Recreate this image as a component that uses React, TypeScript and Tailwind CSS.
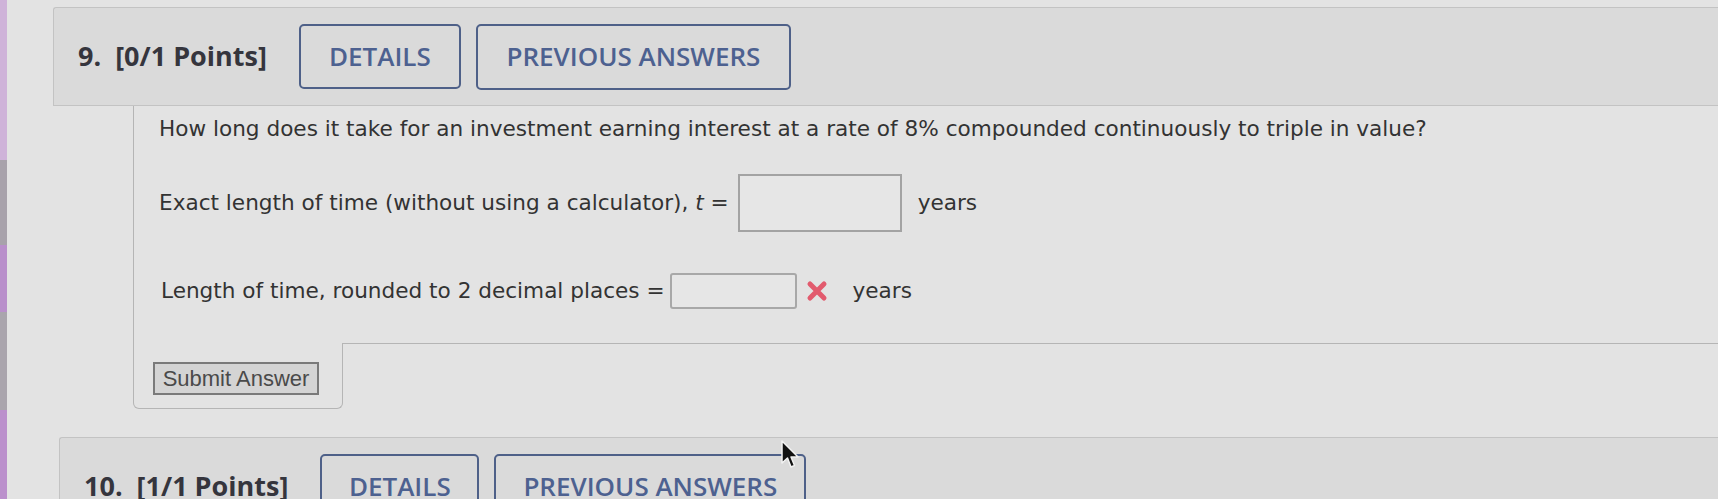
import React from "react";

function RedX() {
  return (
    <svg width="22" height="22" viewBox="0 0 22 22" className="shrink-0">
      <path d="M4 4 L18 18 M18 4 L4 18" stroke="#e25b6e" strokeWidth="5" strokeLinecap="round" />
    </svg>
  );
}

function Cursor() {
  return (
    <svg width="22" height="32" viewBox="0 0 22 32" className="absolute left-[780px] top-[439px]">
      <path d="M2 2 L2 24 L7.5 19 L11 28 L14.5 26.5 L11 18 L18 18 Z" fill="#111" stroke="#f2f2f2" strokeWidth="1.5" strokeLinejoin="round" />
    </svg>
  );
}

function Header({ num, pts, top, left, detailsW, prevW }: { num: string; pts: string; top: string; left: string; detailsW: string; prevW: string }) {
  return (
    <div className={`${top} ${left} h-[99px] shrink-0 bg-[#dadada] border-t border-l border-b border-[#c3c3c3] rounded-tl-[3px] flex items-center pl-[24px] font-['Open_Sans',sans-serif]`}>
      <span className="text-[27px] font-bold text-[#35353d] whitespace-pre">
        {num}
        {"  "}
        {pts}
      </span>
      <div className="flex gap-[15px] ml-[32px]">
        <div className={`${detailsW} h-[65px] border-2 border-[#4e6088] rounded-[5px] flex items-center justify-center text-[26px] font-semibold text-[#4d6190]`}>
          DETAILS
        </div>
        <div className={`${prevW} h-[66px] border-2 border-[#4e6088] rounded-[5px] flex items-center justify-center text-[26px] font-semibold text-[#4d6190]`}>
          PREVIOUS ANSWERS
        </div>
      </div>
    </div>
  );
}

export default function App() {
  return (
    <div className="relative flex h-[499px] w-[1718px] overflow-hidden bg-[#e3e3e3]">
      <div className="w-[7px] shrink-0 flex flex-col">
        <div className="h-[160px] bg-[#cfb3d9]" />
        <div className="h-[85px] bg-[#a8a2ab]" />
        <div className="h-[67px] bg-[#b98fcb]" />
        <div className="h-[98px] bg-[#aaa5ad]" />
        <div className="flex-1 bg-[#bb90cc]" />
      </div>
      <div className="flex-1 flex flex-col">
        <Header num="9." pts="[0/1 Points]" top="mt-[7px]" left="ml-[46px]" detailsW="w-[162px]" prevW="w-[315px]" />
        <div className="ml-[126px] flex flex-col font-['DejaVu_Sans',sans-serif] text-[#333333]">
          <div className="h-[237px] border-l border-[#b5b5b5] pl-[25px] pt-[9px] flex flex-col">
            <div className="h-[28px] flex items-center text-[21.6px] whitespace-nowrap">
              How long does it take for an investment earning interest at a rate of 8% compounded continuously to triple in value?
            </div>
            <div className="mt-[31px] flex items-center text-[21.6px] whitespace-nowrap">
              <span>
                Exact length of time (without using a calculator), <i>t</i> =
              </span>
              <div className="ml-[9px] w-[164px] h-[58px] border-2 border-[#a3a3a3] bg-[#e6e6e6]" />
              <span className="ml-[16px]">years</span>
            </div>
            <div className="mt-[41px] ml-[2px] flex items-center text-[21.6px] whitespace-nowrap">
              <span>Length of time, rounded to 2 decimal places =</span>
              <div className="ml-[5px] w-[127px] h-[36px] border-2 border-[#a8a8a8] rounded-[3px] bg-[#e6e6e6]" />
              <div className="ml-[9px]">
                <RedX />
              </div>
              <span className="ml-[25px]">years</span>
            </div>
          </div>
          <div className="flex h-[66px]">
            <div className="w-[210px] border-l border-b border-r border-[#b5b5b5] rounded-b-[6px] pl-[19px] pt-[19px]">
              <div className="w-[166px] h-[33px] bg-[#d4d4d4] border-2 border-[#7a7a7a] flex items-center justify-center font-['Liberation_Sans',sans-serif] text-[22px] text-[#4a4a4a]">
                Submit Answer
              </div>
            </div>
            <div className="flex-1 border-t border-[#b5b5b5]" />
          </div>
        </div>
        <Header num="10." pts="[1/1 Points]" top="mt-[28px]" left="ml-[52px]" detailsW="w-[159px]" prevW="w-[312px]" />
      </div>
      <Cursor />
    </div>
  );
}
